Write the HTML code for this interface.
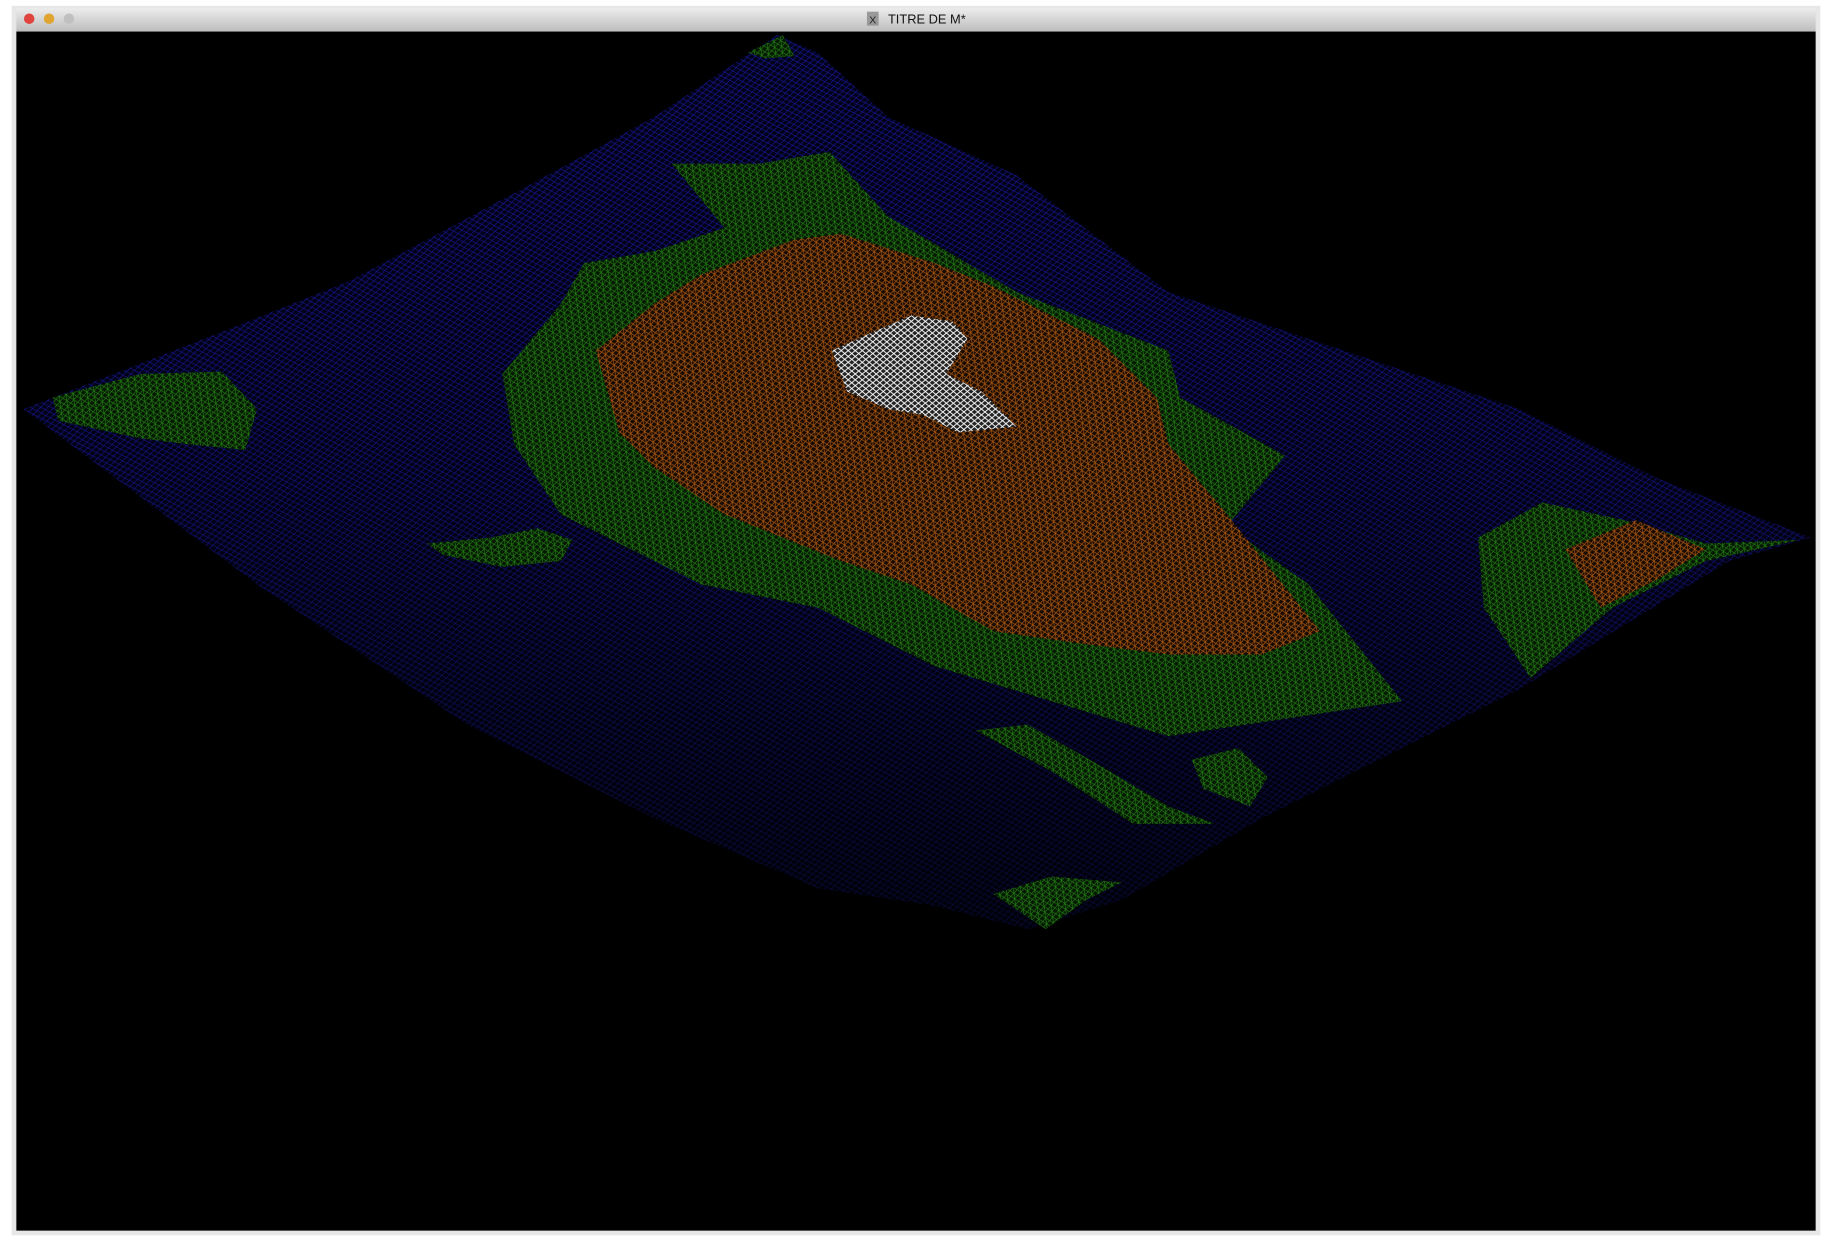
<!DOCTYPE html>
<html><head><meta charset="utf-8"><style>
html,body{margin:0;padding:0;background:#fff;width:1832px;height:1254px;overflow:hidden}
svg{display:block}
</style></head><body>
<svg width="1832" height="1254" viewBox="0 0 1568 1073" preserveAspectRatio="none" xmlns="http://www.w3.org/2000/svg">
<defs>
<linearGradient id="tb" x1="0" y1="0" x2="0" y2="1"><stop offset="0" stop-color="#ececec"/><stop offset="1" stop-color="#bdbdbd"/></linearGradient>
<linearGradient id="fade" x1="0" y1="0" x2="0" y2="1"><stop offset="0" stop-color="#000" stop-opacity="0"/><stop offset="0.5" stop-color="#000" stop-opacity="0.15"/><stop offset="1" stop-color="#000" stop-opacity="0.65"/></linearGradient>
<pattern id="pb" width="7" height="5" patternUnits="userSpaceOnUse" patternTransform="rotate(-8)"><rect width="7" height="5" fill="#020218"/><path d="M0 0L7 5M7 0L0 5" stroke="#1a1aa8" stroke-width="0.45"/></pattern>
<pattern id="pg" width="6" height="5" patternUnits="userSpaceOnUse" patternTransform="rotate(-8)"><rect width="6" height="5" fill="#061a03"/><path d="M0 0L6 5M6 0L0 5M3 0V5" stroke="#238014" stroke-width="0.55"/></pattern>
<pattern id="po" width="6" height="5" patternUnits="userSpaceOnUse" patternTransform="rotate(-8)"><rect width="6" height="5" fill="#180b02"/><path d="M0 0L6 5M6 0L0 5M3 0V5" stroke="#a8560f" stroke-width="0.6"/></pattern>
<pattern id="pw" width="6" height="5" patternUnits="userSpaceOnUse"><rect width="6" height="5" fill="#222"/><path d="M0 0L6 5M6 0L0 5" stroke="#fff" stroke-width="0.8"/></pattern>
</defs>
<rect x="10" y="5" width="1548" height="1052" fill="#cfcfcf" opacity="0.5"/>
<rect x="14" y="7" width="1540" height="20" fill="url(#tb)"/>
<circle cx="25" cy="16" r="4.5" fill="#e0443e"/><circle cx="42" cy="16" r="4.5" fill="#e0a530"/><circle cx="59" cy="16" r="4.5" fill="#c0c0c0"/>
<rect x="742" y="10" width="10" height="12" fill="#999"/>
<text x="747" y="20" font-family="Liberation Sans, sans-serif" font-size="9" fill="#222" text-anchor="middle">X</text>
<text x="760" y="20" font-family="Liberation Sans, sans-serif" font-size="11" fill="#111">TITRE DE M*</text>
<rect x="14" y="27" width="1540" height="1026" fill="#000"/>
<path d="M665 30L700 45L760 100L870 150L1000 250L1150 300L1300 350L1420 410L1550 460L1480 480L1300 590L1080 700L960 770L880 795L800 775L700 760L560 700L400 620L220 500L20 350L200 280L300 240L450 160L560 100Z" fill="url(#pb)"/>
<path d="M665 30L700 45L760 100L870 150L1000 250L1150 300L1300 350L1420 410L1550 460L1480 480L1300 590L1080 700L960 770L880 795L800 775L700 760L560 700L400 620L220 500L20 350L200 280L300 240L450 160L560 100Z" fill="url(#fade)"/>
<path d="M575 140L650 140L710 130L760 185L870 250L1000 300L1010 340L1100 390L1050 450L1120 500L1200 600L1100 615L1000 630L900 600L800 570L700 520L600 500L520 460L480 440L440 380L430 320L480 260L500 225L560 215L620 195Z" fill="url(#pg)"/>
<path d="M510 300L560 260L600 235L680 205L720 200L800 225L850 245L900 270L940 290L990 340L1000 380L1050 440L1130 540L1080 560L1000 560L920 550L850 540L780 500L720 480L620 440L560 400L530 370Z" fill="url(#po)"/>
<path d="M712 300L745 285L780 270L815 275L828 290L810 320L840 335L870 365L820 370L790 355L760 350L725 335Z" fill="url(#pw)"/>
<path d="M45 340L120 320L190 318L220 350L210 385L160 380L120 375L50 360Z" fill="url(#pg)"/>
<path d="M365 465L420 460L460 452L490 462L480 480L430 485L380 475Z" fill="url(#pg)"/>
<path d="M1265 460L1320 430L1390 445L1460 465L1540 462L1460 480L1380 520L1310 580L1270 520Z" fill="url(#pg)"/>
<path d="M1340 470L1400 445L1460 470L1420 495L1370 520Z" fill="url(#po)"/>
<path d="M835 625L880 620L950 660L1000 690L1040 705L970 705L900 660Z" fill="url(#pg)"/>
<path d="M1020 650L1060 640L1085 665L1070 690L1030 675Z" fill="url(#pg)"/>
<path d="M850 765L900 750L960 755L930 770L895 795Z" fill="url(#pg)"/>
<path d="M640 45L670 30L680 48L655 50Z" fill="url(#pg)"/>
</svg>
</body></html>
